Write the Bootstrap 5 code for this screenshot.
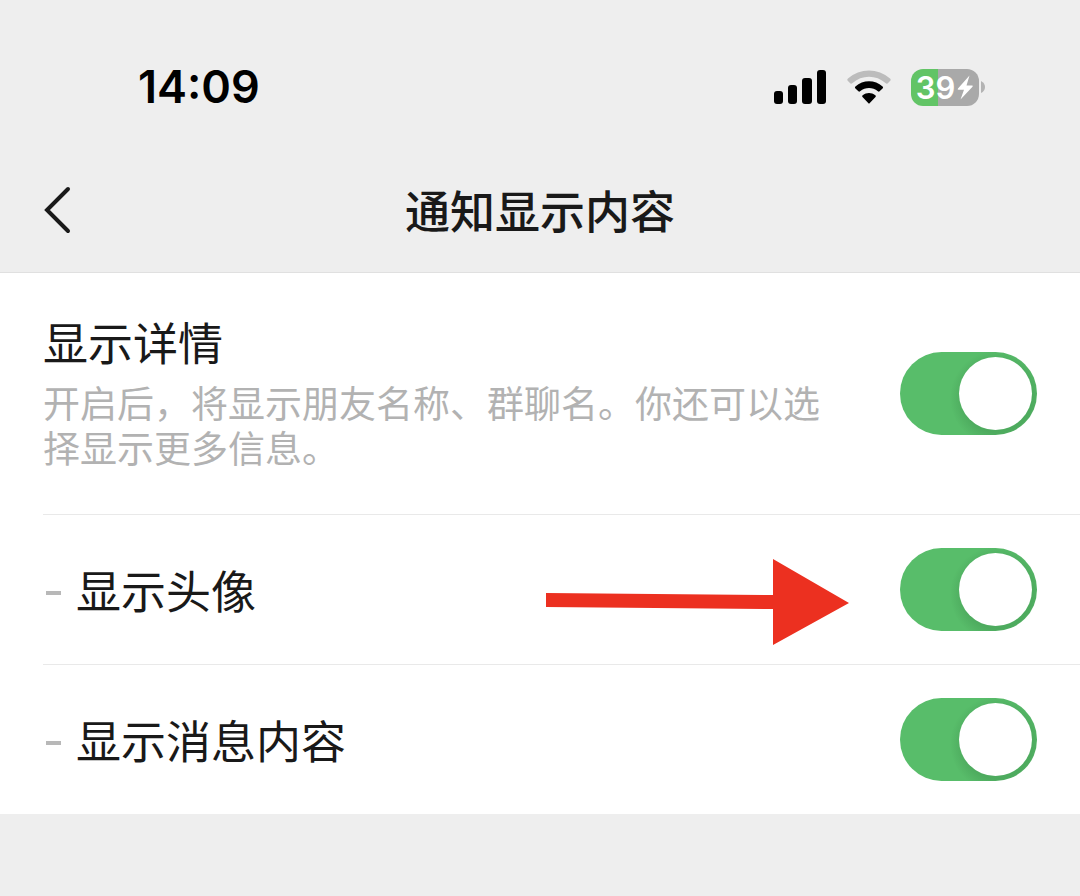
<!DOCTYPE html>
<html lang="zh-CN">
<head>
<meta charset="utf-8">
<meta name="viewport" content="width=device-width, initial-scale=1">
<title>通知显示内容</title>
<link href="https://cdn.jsdelivr.net/npm/bootstrap@5.3.0/dist/css/bootstrap.min.css" rel="stylesheet">
<style>
  body { background: #eee; color: #191919; font-family: "Noto Sans CJK SC", sans-serif; }
  .top-area { border-bottom: 1px solid #e0e0e0; }
  .status-bar { height: 148px; padding: 26px 95px 0 138px; color: #000; font-family: Inter, sans-serif; }
  .clock { font-size: 45px; font-weight: 600; line-height: 60px; }
  .status-icons { gap: 20px; }
  .battery { gap: 2px; }
  .battery-body { gap: 2px; width: 68px; height: 37px; border-radius: 12px; color: #fff; font-size: 31px; font-weight: 600; line-height: 37px;
    background: linear-gradient(to right, #62c466 39%, #a9a9a9 39%); }
  .title-bar { height: 124px; grid-template-columns: 1fr auto 1fr; padding: 0 43px; }
  .title-bar h1 { font-size: 45px; font-weight: 500; line-height: 60px; }
  .setting { margin-left: 43px; padding-right: 43px; min-height: 150px; }
  .setting + .setting { border-top: 1px solid #e9e9e9; }
  .setting-tall { min-height: 241px; }
  .setting-text { padding-bottom: 6px; }
  .setting label { font-size: 45px; line-height: 60px; }
  .setting p { max-width: 790px; color: #b2b2b2; font-size: 37px; line-height: 45px; }
  .dash { width: 15px; height: 4px; margin: 6px 15px 0 3px; background: #b8b8b8; }
  .pointer { margin-right: 51px; margin-top: 24px; }
  .form-check-input.toggle { width: 137px; height: 83px; margin: 0; border: 0; border-radius: 42px; background-color: #ddd;
    background-image: url("data:image/svg+xml,%3Csvg xmlns='http://www.w3.org/2000/svg' viewBox='0 0 137 83'%3E%3Ccircle cx='42' cy='41.5' r='36.5' fill='white'/%3E%3C/svg%3E");
    background-size: 100% 100%; background-position: center; }
  .form-check-input.toggle:checked { background-color: #58bd6a;
    background-image: url("data:image/svg+xml,%3Csvg xmlns='http://www.w3.org/2000/svg' viewBox='0 0 137 83'%3E%3Cdefs%3E%3CradialGradient id='s' gradientUnits='userSpaceOnUse' cx='98' cy='46' r='48'%3E%3Cstop offset='.72' stop-color='%23174b20' stop-opacity='.16'/%3E%3Cstop offset='1' stop-color='%23174b20' stop-opacity='0'/%3E%3C/radialGradient%3E%3C/defs%3E%3Ccircle cx='98' cy='46' r='48' fill='url(%23s)'/%3E%3Ccircle cx='95.5' cy='41.5' r='36.5' fill='white'/%3E%3C/svg%3E"); }
</style>
</head>
<body>
<header class="top-area">
  <div class="status-bar d-flex justify-content-between align-items-center">
    <div class="clock">14:09</div>
    <div class="status-icons d-flex align-items-center">
      <svg width="54" height="34" viewBox="0 0 54 34" aria-hidden="true">
        <rect x="1" y="21" width="9" height="13" rx="3"/>
        <rect x="15" y="15" width="9" height="19" rx="3"/>
        <rect x="29" y="8" width="10" height="26" rx="3"/>
        <rect x="44" y="0" width="9" height="34" rx="3"/>
      </svg>
      <svg width="44" height="34" viewBox="0 0 44 34" aria-hidden="true">
        <path fill="#bcbcbc" d="M.5 10.500Q0 9.500 1 8.600C13-2.200 31-2.200 43 8.600Q44 9.500 43.500 10.500L40.500 13.500Q39.600 14 38.800 13.300C29 4.700 15 4.700 5.200 13.300Q4.400 14 3.500 13.500Z"/>
        <path d="M8.200 18.200Q7.500 17.300 8.400 16.500C16 9.500 28 9.500 35.600 16.500Q36.500 17.300 35.800 18.200L32.600 21.300Q31.800 22 30.900 21.300C25.500 17 18.500 17 13.100 21.300Q12.200 22 11.400 21.300Z"/>
        <path d="M15.500 27Q14.500 26 15.700 25.200C19.500 22.300 24.500 22.300 28.300 25.200Q29.500 26 28.500 27L22.800 33Q22 34 21.200 33Z"/>
      </svg>
      <div class="battery d-flex align-items-center">
        <div class="battery-body d-flex align-items-center justify-content-center">39<svg width="17" height="25" viewBox="0 0 17 25" aria-hidden="true"><path fill="#fff" d="M12.500.5 1 13.500q-1 1.200.6 1.200H7L3.500 24.500 15.500 11.800q1-1.300-.6-1.300H9.500Z"/></svg></div>
        <svg width="4" height="12" viewBox="0 0 4 12" aria-hidden="true"><path fill="#b3b3b3" d="M0 0Q4 2 4 6T0 12Z"/></svg>
      </div>
    </div>
  </div>
  <nav class="title-bar d-grid align-items-center">
    <button type="button" class="btn p-0 border-0 text-start" aria-label="返回">
      <svg width="30" height="48" viewBox="0 0 30 48" fill="none" stroke="#191919" stroke-width="4" stroke-linecap="round" aria-hidden="true"><path d="M25 3 4 24 25 45"/></svg>
    </button>
    <h1 class="m-0">通知显示内容</h1>
  </nav>
</header>
<main class="bg-white">
  <div class="setting setting-tall d-flex align-items-center justify-content-between">
    <div class="setting-text">
      <label class="d-block mb-2" for="detail">显示详情</label>
      <p class="m-0" id="detail-help">开启后，将显示朋友名称、群聊名。你还可以选择显示更多信息。</p>
    </div>
    <input class="form-check-input toggle flex-shrink-0" type="checkbox" role="switch" id="detail" aria-describedby="detail-help" checked>
  </div>
  <div class="setting d-flex align-items-center">
    <span class="dash"></span>
    <label for="avatar">显示头像</label>
    <svg class="pointer ms-auto" width="303" height="88" viewBox="0 0 303 88" aria-hidden="true"><path fill="#ec3020" d="M0 35 227 37V1L303 45 227 87V51L0 49Z"/></svg>
    <input class="form-check-input toggle flex-shrink-0" type="checkbox" role="switch" id="avatar" checked>
  </div>
  <div class="setting d-flex align-items-center">
    <span class="dash"></span>
    <label for="message">显示消息内容</label>
    <input class="form-check-input toggle flex-shrink-0 ms-auto" type="checkbox" role="switch" id="message" checked>
  </div>
</main>
<script src="https://cdn.jsdelivr.net/npm/bootstrap@5.3.0/dist/js/bootstrap.bundle.min.js"></script>
</body>
</html>
